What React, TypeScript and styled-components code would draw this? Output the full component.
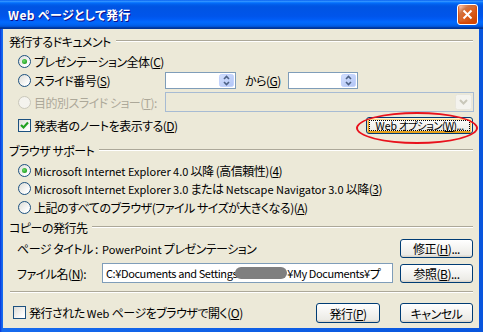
import * as React from 'react'
import styled, {createGlobalStyle} from 'styled-components'

const GlobalStyle = createGlobalStyle`
  html, body {
    margin: 0;
    padding: 0;
    background: #fff;
  }
  body {
    font-family: "Noto Sans CJK JP", sans-serif;
    font-size: 12px;
    letter-spacing: -0.5px;
    color: #000;
    font-feature-settings: "palt";
  }
`

const Window = styled.div`
  width: 483px;
  height: 332px;
  display: flex;
  flex-direction: column;
  background: linear-gradient(to right, #0831D9 0, #166AEE 2px, #0855DD 100%);
  box-sizing: border-box;
`

const TitleBar = styled.div`
  height: 29px;
  flex: none;
  display: flex;
  align-items: center;
  justify-content: space-between;
  padding: 0 5px 0 8px;
  background: linear-gradient(180deg, #0058ee 0%, #3593ff 4%, #288eff 6%, #127dff 8%, #036ffc 10%, #0262ee 14%, #0057e5 20%, #0054e3 24%, #0055eb 56%, #005bf5 66%, #026afe 76%, #0062ef 86%, #0052d6 92%, #0040ab 94%, #003092 100%);
`

const TitleText = styled.div`
  color: #fff;
  font-weight: bold;
  font-size: 12px;
  letter-spacing: 0.4px;
  text-shadow: 1px 1px #0f1089;
`

const CloseButton = styled.div`
  width: 21px;
  height: 21px;
  box-sizing: border-box;
  border: 1px solid #fff;
  border-radius: 3px;
  background: radial-gradient(circle at 90% 90%, #cc4600 0, #dc6527 55%, #cd7546 70%, #ffccb2 90%, #fff 100%);
  box-shadow: inset 0 -1px 2px 1px #da4600;
  display: flex;
  align-items: center;
  justify-content: center;
`

const Client = styled.div`
  flex: 1;
  margin: 0 4px 4px 3px;
  background: #ece9d8;
  padding: 5px 6px 0 5px;
  display: flex;
  flex-direction: column;
`

const GroupHeader = styled.div<{ $top?: number }>`
  display: flex;
  align-items: center;
  gap: 5px;
  height: 14px;
  padding-left: 1px;
  margin-top: ${p => p.$top ?? 0}px;
  white-space: nowrap;
`

const EtchedLine = styled.div`
  flex: 1;
  height: 0;
  border-top: 1px solid #aca899;
  border-bottom: 1px solid #fff;
`

const Row = styled.div<{ $top: number; $height: number; $indent: number }>`
  display: flex;
  align-items: center;
  height: ${p => p.$height}px;
  margin-top: ${p => p.$top}px;
  padding-left: ${p => p.$indent}px;
  white-space: nowrap;
`

const Choice = styled.div<{ $width?: number; $disabled?: boolean }>`
  display: flex;
  align-items: center;
  width: ${p => (p.$width ? `${p.$width}px` : 'auto')};
  flex: none;
  color: ${p => (p.$disabled ? '#aca899' : '#000')};
`

const Lat = styled.span<{ $tight?: boolean }>`
  font-size: 11px;
  letter-spacing: ${p => (p.$tight ? '-0.4px' : '0')};
`

const RadioCircle = styled.span<{ $disabled?: boolean }>`
  width: 13px;
  height: 13px;
  margin-right: 3px;
  box-sizing: border-box;
  border-radius: 50%;
  border: 1px solid ${p => (p.$disabled ? '#cac8bb' : '#1c5180')};
  background: ${p => (p.$disabled ? '#f4f3ee' : 'linear-gradient(135deg, #dcdcd7 0%, #fff 80%)')};
  display: flex;
  align-items: center;
  justify-content: center;
  flex: none;
`

const RadioDot = styled.span`
  width: 5px;
  height: 5px;
  border-radius: 50%;
  background: radial-gradient(circle at 40% 40%, #6fdc6f 0, #21a121 70%, #1a8a1a 100%);
`

const CheckBox = styled.span`
  width: 13px;
  height: 13px;
  margin-right: 3px;
  box-sizing: border-box;
  border: 1px solid #1c5180;
  background: linear-gradient(135deg, #dcdcd7 0%, #fff 85%);
  display: flex;
  align-items: center;
  justify-content: center;
  flex: none;
`

const SpinBox = styled.div<{ $width: number }>`
  width: ${p => p.$width}px;
  height: 17px;
  box-sizing: border-box;
  border: 1px solid #7f9db9;
  background: #fff;
  display: flex;
  justify-content: flex-end;
  align-items: center;
  padding-right: 1px;
  flex: none;
`

const Caption = styled.span<{ $width: number; $gapLeft: number }>`
  width: ${p => p.$width}px;
  margin-left: ${p => p.$gapLeft}px;
  flex: none;
`

const Combo = styled.div`
  flex: 1;
  height: 20px;
  margin-right: -1px;
  box-sizing: border-box;
  border: 1px solid #a7bbd3;
  background: #ece9d8;
  display: flex;
  justify-content: flex-end;
  align-items: center;
  padding-right: 1px;
`

const Button = styled.div<{ $width: number; $height: number; $focused?: boolean }>`
  width: ${p => p.$width}px;
  height: ${p => p.$height}px;
  box-sizing: border-box;
  border: 1px solid #003c74;
  border-radius: 3px;
  background: linear-gradient(180deg, #fff, #ecebe6 86%, #d6d0c5);
  display: flex;
  align-items: center;
  justify-content: center;
  flex: none;
  white-space: nowrap;
  ${p =>
    p.$focused &&
    `
    font-size: 10.5px;
    letter-spacing: -0.6px;
    box-shadow: inset -1px 1px #fff0cf, inset 1px 2px #fdd889, inset -2px 2px #fbc761, inset 2px -2px #e5a01a;
    outline: 1px dotted #000;
    outline-offset: -4px;
  `}
  ${Lat} {
    font-size: ${p => (p.$focused ? '10.5px' : '11px')};
  }
`

const ButtonWrap = styled.div`
  position: relative;
  margin-left: auto;
`

const Highlight = styled.div`
  position: absolute;
  left: -10px;
  top: -5px;
  width: 122px;
  height: 32px;
  box-sizing: border-box;
  border: 2px solid #e8121c;
  border-radius: 50%;
  pointer-events: none;
`

const FieldLabel = styled.span`
  width: 85px;
  flex: none;
`

const Value = styled.span`
  flex: 1;
`

const TextBox = styled.div`
  width: 291px;
  height: 20px;
  box-sizing: border-box;
  border: 1px solid #7f9db9;
  background: #fff;
  padding-left: 3px;
  margin-right: 7px;
  display: flex;
  align-items: center;
  overflow: hidden;
  flex: none;
`

const Redacted = styled.span`
  display: inline-block;
  width: 52px;
  height: 12px;
  margin-left: -2px;
  border-radius: 6px;
  background: #7f7f7f;
  flex: none;
`

const BottomRow = styled.div`
  display: flex;
  align-items: flex-start;
  height: 22px;
  margin-top: 9px;
  padding-left: 5px;
  white-space: nowrap;
`

const BottomCheck = styled(Choice)`
  margin-top: 2px;
  margin-right: auto;
`

const ButtonGroup = styled.div`
  display: flex;
  gap: 20px;
  margin-top: 1px;
`

const Radio = ({checked, disabled}: { checked?: boolean, disabled?: boolean }) => (
    <RadioCircle $disabled={disabled}>{checked && <RadioDot/>}</RadioCircle>
)

const Check = ({checked}: { checked?: boolean }) => (
    <CheckBox>
        {checked &&
        <svg width="9" height="9" viewBox="0 0 9 9">
            <path d="M1 4 L3.5 6.5 L8 1.5" fill="none" stroke="#21a121" strokeWidth="2.2"/>
        </svg>}
    </CheckBox>
)

const SpinArrows = () => (
    <svg width="15" height="13" viewBox="0 0 15 13">
        <defs>
            <linearGradient id="spin" x1="0" y1="0" x2="1" y2="1">
                <stop offset="0" stopColor="#d4e0fd"/>
                <stop offset="1" stopColor="#b1c5f6"/>
            </linearGradient>
        </defs>
        <rect x="0.5" y="0.5" width="14" height="12" rx="2" fill="url(#spin)" stroke="#c3d3fd"/>
        <path d="M5 5 L7.5 2.5 L10 5" fill="none" stroke="#4d6185" strokeWidth="1.6"/>
        <path d="M5 8 L7.5 10.5 L10 8" fill="none" stroke="#4d6185" strokeWidth="1.6"/>
    </svg>
)

const ComboArrow = () => (
    <svg width="17" height="16" viewBox="0 0 17 16">
        <rect x="0.5" y="0.5" width="16" height="15" rx="2" fill="#f4f3ee" stroke="#e8e6dc"/>
        <path d="M5 6 L8.5 9.5 L12 6" fill="none" stroke="#c9c7ba" strokeWidth="2"/>
    </svg>
)

export default function App() {
    return (
        <>
            <GlobalStyle/>
            <Window>
                <TitleBar>
                    <TitleText>Web ページとして発行</TitleText>
                    <CloseButton>
                        <svg width="11" height="11" viewBox="0 0 11 11">
                            <path d="M1.5 1.5 L9.5 9.5 M9.5 1.5 L1.5 9.5" stroke="#fff" strokeWidth="2"/>
                        </svg>
                    </CloseButton>
                </TitleBar>
                <Client>
                    <GroupHeader>
                        <span>発行するドキュメント</span>
                        <EtchedLine/>
                    </GroupHeader>
                    <Row $top={4} $height={18} $indent={10}>
                        <Choice><Radio checked/><span>プレゼンテーション全体(<u>C</u>)</span></Choice>
                    </Row>
                    <Row $top={1} $height={18} $indent={10}>
                        <Choice $width={147}><Radio/><span>スライド番号(<u>S</u>)</span></Choice>
                        <SpinBox $width={71}><SpinArrows/></SpinBox>
                        <Caption $width={43} $gapLeft={9}>から(<u>G</u>)</Caption>
                        <SpinBox $width={70}><SpinArrows/></SpinBox>
                    </Row>
                    <Row $top={3} $height={20} $indent={10}>
                        <Choice $width={147} $disabled><Radio disabled/><span>目的別スライド ショー(<u>T</u>):</span></Choice>
                        <Combo><ComboArrow/></Combo>
                    </Row>
                    <Row $top={3} $height={20} $indent={10}>
                        <Choice><Check checked/><span>発表者のノートを表示する(<u>D</u>)</span></Choice>
                        <ButtonWrap>
                            <Button $width={107} $height={17} $focused><span><Lat>Web</Lat> オプション(<u>W</u>)...</span></Button>
                            <Highlight/>
                        </ButtonWrap>
                    </Row>
                    <GroupHeader $top={8}>
                        <span>ブラウザ サポート</span>
                        <EtchedLine/>
                    </GroupHeader>
                    <Row $top={4} $height={18} $indent={10}>
                        <Choice><Radio checked/><span><Lat>Microsoft Internet Explorer 4.0</Lat> 以降 (高信頼性)(<u>4</u>)</span></Choice>
                    </Row>
                    <Row $top={0} $height={18} $indent={10}>
                        <Choice><Radio/><span><Lat>Microsoft Internet Explorer 3.0</Lat> または <Lat>Netscape Navigator 3.0</Lat> 以降(<u>3</u>)</span></Choice>
                    </Row>
                    <Row $top={1} $height={18} $indent={10}>
                        <Choice><Radio/><span>上記のすべてのブラウザ(ファイル サイズが大きくなる)(<u>A</u>)</span></Choice>
                    </Row>
                    <GroupHeader $top={4}>
                        <span>コピーの発行先</span>
                        <EtchedLine/>
                    </GroupHeader>
                    <Row $top={4} $height={20} $indent={9}>
                        <FieldLabel>ページ タイトル :</FieldLabel>
                        <Value><Lat>PowerPoint</Lat> プレゼンテーション</Value>
                        <Button $width={73} $height={19}><span>修正(<u>H</u>)...</span></Button>
                    </Row>
                    <Row $top={5} $height={20} $indent={9}>
                        <FieldLabel>ファイル名(<u>N</u>):</FieldLabel>
                        <TextBox>
                            <Lat $tight>C:¥Documents and Settings</Lat><Redacted/><Lat $tight>¥My Documents¥</Lat>プ
                        </TextBox>
                        <Button $width={73} $height={19}><span>参照(<u>B</u>)...</span></Button>
                    </Row>
                    <Row $top={8} $height={2} $indent={2}>
                        <EtchedLine/>
                    </Row>
                    <BottomRow>
                        <BottomCheck><Check/><span>発行された <Lat>Web</Lat> ページをブラウザで開く(<u>O</u>)</span></BottomCheck>
                        <ButtonGroup>
                            <Button $width={64} $height={20}><span>発行(<u>P</u>)</span></Button>
                            <Button $width={73} $height={20}>キャンセル</Button>
                        </ButtonGroup>
                    </BottomRow>
                </Client>
            </Window>
        </>
    )
}
